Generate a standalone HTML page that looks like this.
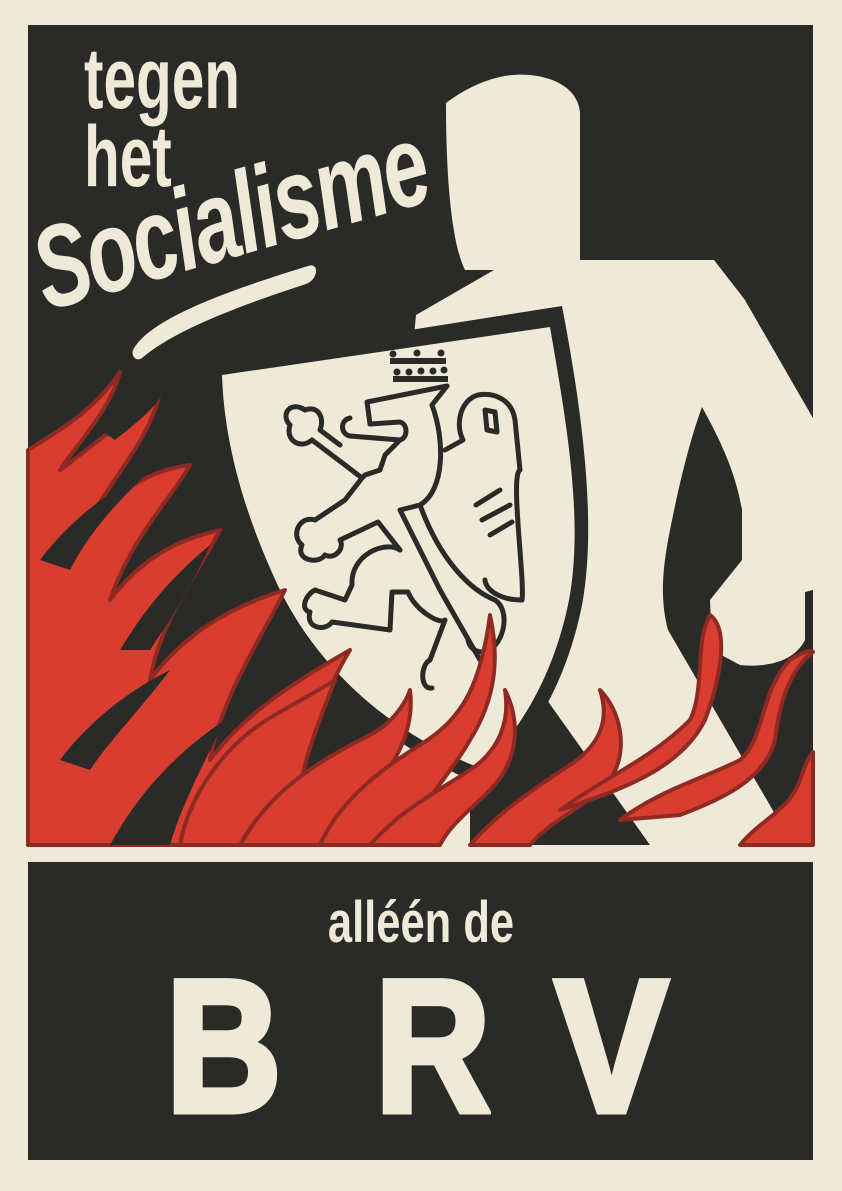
<!DOCTYPE html>
<html><head><meta charset="utf-8"><style>
html,body{margin:0;padding:0;background:#efead7;}
body{width:842px;height:1191px;position:relative;overflow:hidden;}
svg{position:absolute;left:0;top:0;}
.t{position:absolute;color:#efead7;font-family:"Liberation Sans",sans-serif;font-weight:bold;line-height:1;white-space:nowrap;}
</style></head><body>
<svg width="842" height="1191" viewBox="0 0 842 1191">
<rect x="0" y="0" width="842" height="1191" fill="#efead7"/>
<rect x="28" y="25" width="785" height="820" fill="#2a2b28"/>
<rect x="28" y="862" width="785" height="298" fill="#2a2b28"/>
<path fill="#efead7" d="M446,103 C470,85 500,72 530,75 C560,78 578,92 580,112 L580,260 L714,260 L745,300 L813,418 L813,590 L805,592 L805,640 C795,660 770,668 740,665 L712,650 L710,600 L742,560 L742,510 C735,470 720,440 702,407 C690,440 680,480 670,530 C662,570 660,600 668,630 L793,845 L650,845 L547,700 L470,780 L470,845 L380,845 L380,700 L416,315 L494,270 L465,270 C455,250 446,200 446,103 Z"/>
<path fill="#2a2b28" d="M745,300 L813,300 L813,418 Z"/>
<path fill="#2a2b28" d="M208,362 L562,306 C580,400 598,520 582,605 C565,690 525,750 482,785 C400,752 315,690 268,595 C228,515 210,440 208,362 Z"/>
<path fill="#efead7" d="M222,375 L550,327 C566,420 584,520 569,600 C554,676 518,735 480,768 C402,738 325,680 280,590 C243,512 224,440 222,375 Z"/>
<g fill="#2a2b28">
<circle cx="393" cy="354" r="3.5"/><circle cx="417" cy="353" r="3.5"/><circle cx="441" cy="353" r="3.5"/>
<rect x="390" y="358" width="56" height="6"/>
<circle cx="397" cy="372" r="3.5"/><circle cx="409" cy="372" r="3.5"/><circle cx="421" cy="371" r="3.5"/><circle cx="433" cy="371" r="3.5"/><circle cx="444" cy="370" r="3.5"/>
<rect x="393" y="376" width="55" height="6"/>
</g>
<g fill="none" stroke="#2a2b28" stroke-width="5" stroke-linejoin="round" stroke-linecap="round">
<path d="M447,386 L367,402 L370,424 L400,422 C408,424 408,438 400,440 L350,436 C340,434 340,420 350,418"/>
<path d="M447,386 L432,405 C445,440 445,490 420,505 C440,560 470,590 495,600 C510,610 505,640 490,650 C480,655 470,650 468,640"/>
<path d="M400,440 L385,455 L380,470 L365,475 L362,478 L345,465 L312,440 C300,450 285,440 290,425 C280,415 290,400 305,410 C318,405 325,418 320,430 L340,445"/>
<path d="M362,478 L345,500 L315,520 C300,515 290,535 302,545 C295,560 318,565 325,555 C335,560 345,548 340,540 L378,522 L400,550"/>
<path d="M400,550 C385,540 350,555 352,585 L345,600 L315,590 C305,595 300,610 310,612 C305,628 325,632 332,622 L390,630 L392,592 L408,592 C415,610 440,625 445,620 L430,660 C420,665 420,690 432,688"/>
<path d="M420,505 L400,510 L440,590 L480,660 C485,665 495,660 490,650"/>
<path d="M445,450 L463,440 C455,425 460,400 478,395 C495,392 512,400 515,420 L520,470 C510,475 525,580 522,600 C500,600 486,590 485,580"/>
<path d="M476,505 L500,490 M482,520 L510,505 M490,535 L512,522 M485,410 L487,430 L497,432 L495,412 Z"/>
</g>
<g fill="#d93d30" stroke="#8f2a23" stroke-width="4" stroke-linejoin="round">
<path d="M28,450 C60,430 95,410 120,372 C110,410 80,440 60,470 C100,440 125,420 160,392 C150,440 110,480 90,520 C120,490 150,470 190,465 C170,500 130,540 110,600 C140,560 175,540 220,530 C200,570 160,620 150,680 C180,640 220,610 285,590 C260,640 220,700 210,760 C240,720 280,690 350,650 C320,700 300,760 290,845 L28,845 Z"/>
<path d="M180,845 C190,790 230,740 275,715 C300,700 320,690 335,680 C320,720 300,760 290,845 Z"/>
<path d="M240,845 C270,790 320,760 370,735 C390,725 405,705 410,690 C415,730 395,770 360,800 C340,815 330,830 325,845 Z"/>
<path d="M320,845 C340,800 380,770 420,745 C460,720 480,690 490,615 C500,660 495,700 470,740 C450,775 420,805 400,845 Z"/>
<path d="M370,845 C400,810 440,790 470,770 C500,750 510,720 505,690 C520,720 520,760 490,790 C470,810 450,825 440,845 Z"/>
<path d="M470,845 C500,810 540,785 570,765 C600,745 610,720 600,690 C620,710 630,750 610,780 C590,805 550,820 530,845 Z"/>
<path d="M560,810 C600,780 650,760 690,720 C705,690 695,640 710,615 C730,630 720,680 705,720 C680,770 620,790 560,810 Z"/>
<path d="M620,820 C660,790 700,780 740,760 C765,740 760,690 790,660 C805,650 812,650 813,652 C790,670 780,700 775,740 C765,780 720,800 680,815 Z"/>
<path d="M740,845 C760,820 790,810 800,780 C805,765 810,755 813,752 L813,845 Z"/>
</g>
<g fill="#2a2b28">
<path d="M40,560 C70,520 110,490 150,470 C120,500 90,530 70,570 Z"/>
<path d="M120,650 C150,600 180,570 210,545 C190,590 170,620 150,650 Z"/>
<path d="M60,760 C90,720 130,690 170,670 C140,710 110,740 90,770 Z"/>
<path d="M110,845 C140,790 180,750 225,720 C200,770 180,810 170,845 Z"/>
<path d="M100,430 C130,410 150,395 170,380 C160,405 140,420 115,440 Z"/>
</g>
<path fill="#efead7" d="M133,350 C150,318 230,290 308,266 C320,262 318,280 306,284 C232,308 172,332 142,358 C136,362 131,356 133,350 Z"/>
</svg>
<div class="t" style="left:84px;top:36px;font-size:86px;transform:scaleX(0.68);transform-origin:0 0;">tegen</div>
<div class="t" style="left:84px;top:114px;font-size:86px;transform:scaleX(0.68);transform-origin:0 0;">het</div>
<div class="t" style="left:52px;top:212px;font-size:116px;font-style:italic;transform:rotate(-16deg) scaleX(0.7);transform-origin:0 100%;letter-spacing:-3px;">Socialisme</div>
<div class="t" style="left:0;width:842px;text-align:center;top:894px;font-size:58px;transform:scaleX(0.75);transform-origin:421px 0;">alléén de</div>
<div class="t" style="left:166px;top:952px;font-size:188px;-webkit-text-stroke:7px #efead7;transform:scaleX(0.85);transform-origin:0 0;">B</div>
<div class="t" style="left:375px;top:952px;font-size:188px;-webkit-text-stroke:7px #efead7;transform:scaleX(0.85);transform-origin:0 0;">R</div>
<div class="t" style="left:555px;top:952px;font-size:188px;-webkit-text-stroke:7px #efead7;transform:scaleX(0.9);transform-origin:0 0;">V</div>
</body></html>
